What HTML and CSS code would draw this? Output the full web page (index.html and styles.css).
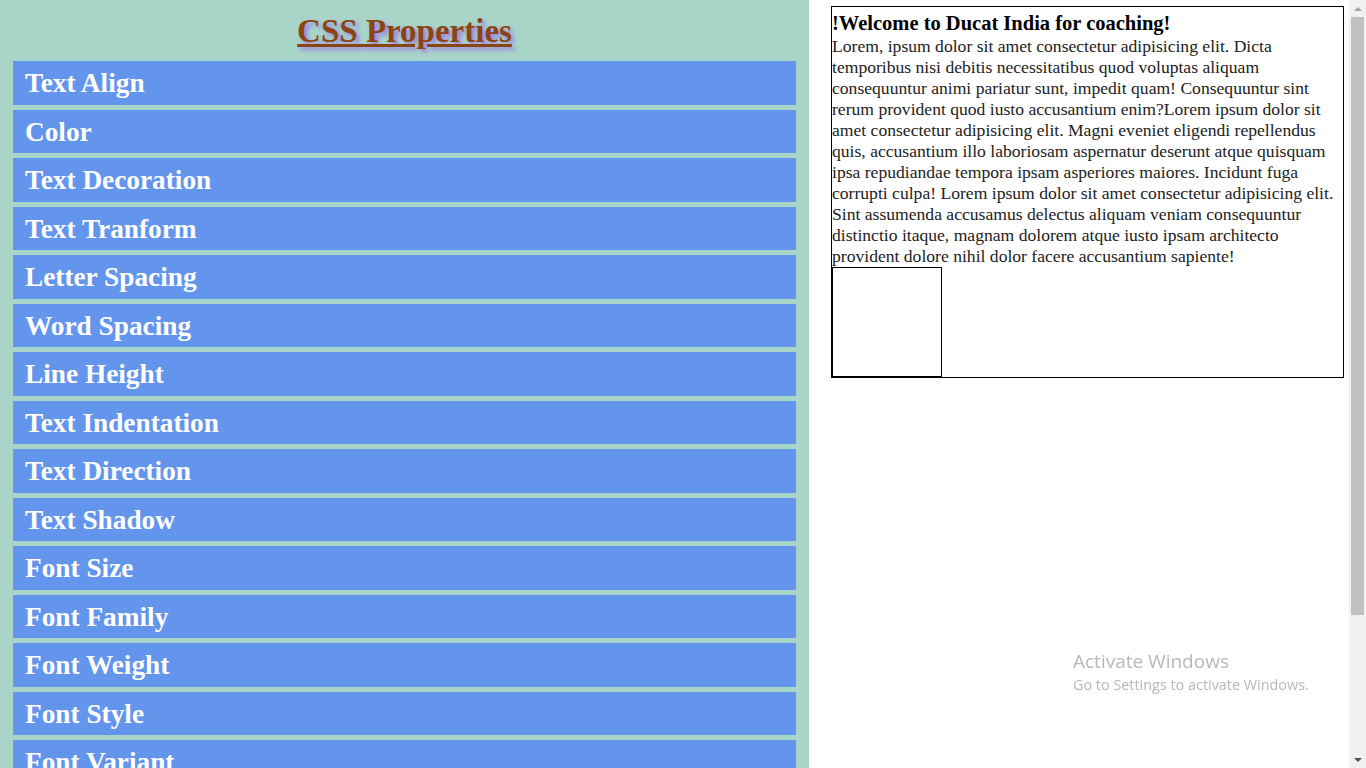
FILE: index.html
```html
<!DOCTYPE html>
<html lang="en">
<head>
<meta charset="utf-8">
<title>CSS Properties</title>
<link rel="stylesheet" href="styles.css">
</head>
<body>
<div class="page">
  <div class="left">
    <h1 class="title">CSS Properties</h1>
    <ul class="menu">
      <li class="item">Text Align</li>
      <li class="item">Color</li>
      <li class="item">Text Decoration</li>
      <li class="item">Text Tranform</li>
      <li class="item">Letter Spacing</li>
      <li class="item">Word Spacing</li>
      <li class="item">Line Height</li>
      <li class="item">Text Indentation</li>
      <li class="item">Text Direction</li>
      <li class="item">Text Shadow</li>
      <li class="item">Font Size</li>
      <li class="item">Font Family</li>
      <li class="item">Font Weight</li>
      <li class="item">Font Style</li>
      <li class="item">Font Variant</li>
    </ul>
  </div>
  <div class="right">
    <div class="card">
      <h3 class="card-title">!Welcome to Ducat India for coaching!</h3>
      <p class="card-text">Lorem, ipsum dolor sit amet consectetur adipisicing elit. Dicta temporibus nisi debitis necessitatibus quod voluptas aliquam consequuntur animi pariatur sunt, impedit quam! Consequuntur sint rerum provident quod iusto accusantium enim?Lorem ipsum dolor sit amet consectetur adipisicing elit. Magni eveniet eligendi repellendus quis, accusantium illo laboriosam aspernatur deserunt atque quisquam ipsa repudiandae tempora ipsam asperiores maiores. Incidunt fuga corrupti culpa! Lorem ipsum dolor sit amet consectetur adipisicing elit. Sint assumenda accusamus delectus aliquam veniam consequuntur distinctio itaque, magnam dolorem atque iusto ipsam architecto provident dolore nihil dolor facere accusantium sapiente!</p>
      <div class="square"></div>
    </div>
  </div>
  <div class="scrollbar">
    <div class="sb-btn"><span class="arrow-up"></span></div>
    <div class="sb-track"><div class="sb-thumb"></div></div>
    <div class="sb-btn"><span class="arrow-down"></span></div>
  </div>
</div>
<div class="watermark">
  <div class="wm-title">Activate Windows</div>
  <div class="wm-sub">Go to Settings to activate Windows.</div>
</div>
</body>
</html>
```

FILE: styles.css
```css
html, body {
  margin: 0;
  padding: 0;
  height: 768px;
  overflow: hidden;
}

body {
  font-family: "Liberation Serif", "Times New Roman", serif;
  background: #ffffff;
}

.page {
  display: flex;
  height: 768px;
}

.left {
  width: 809px;
  flex: none;
  box-sizing: border-box;
  padding: 0 13px;
  background: #a8d5c8;
  overflow: hidden;
}

.title {
  margin: 0;
  height: 61px;
  box-sizing: border-box;
  padding-top: 2px;
  line-height: 59px;
  font-size: 33px;
  font-weight: bold;
  text-align: center;
  color: #8b4513;
  text-decoration: underline;
  text-shadow: 3px 3px 4px #9d7be6;
}

.menu {
  list-style: none;
  margin: 0;
  padding: 0;
  display: flex;
  flex-direction: column;
  gap: 5px;
}

.item {
  height: 43.5px;
  box-sizing: border-box;
  padding: 1px 0 0 12px;
  line-height: 42.5px;
  background: #6495ed;
  color: #ffffff;
  font-size: 27.3px;
  font-weight: bold;
  white-space: nowrap;
}

.right {
  flex: 1;
  padding: 6px 5px 0 22px;
}

.card {
  border: 1px solid #000000;
}

.card-title {
  margin: 0;
  padding-top: 4px;
  font-size: 20.5px;
  line-height: 25px;
  font-weight: bold;
  color: #000000;
}

.card-text {
  margin: 0;
  font-size: 17.6px;
  line-height: 21px;
  color: #222222;
}

.square {
  width: 108px;
  height: 108px;
  border: 1px solid #000000;
}

.scrollbar {
  width: 17px;
  flex: none;
  display: flex;
  flex-direction: column;
  background: #f1f1f1;
}

.sb-btn {
  height: 17px;
  display: flex;
  align-items: center;
  justify-content: center;
}

.arrow-up {
  width: 0;
  height: 0;
  border-left: 4px solid transparent;
  border-right: 4px solid transparent;
  border-bottom: 4px solid #a3a3a3;
}

.arrow-down {
  width: 0;
  height: 0;
  border-left: 4px solid transparent;
  border-right: 4px solid transparent;
  border-top: 4px solid #505050;
}

.sb-track {
  flex: 1;
  padding: 0 2px;
}

.sb-thumb {
  height: 598px;
  background: #c1c1c1;
}

.watermark {
  position: fixed;
  left: 1073px;
  top: 649px;
  font-family: "Open Sans", "Noto Sans", sans-serif;
  color: #b8b8b8;
}

.wm-title {
  font-size: 19px;
  line-height: 25px;
}

.wm-sub {
  font-size: 14.4px;
  line-height: 22px;
}
```
